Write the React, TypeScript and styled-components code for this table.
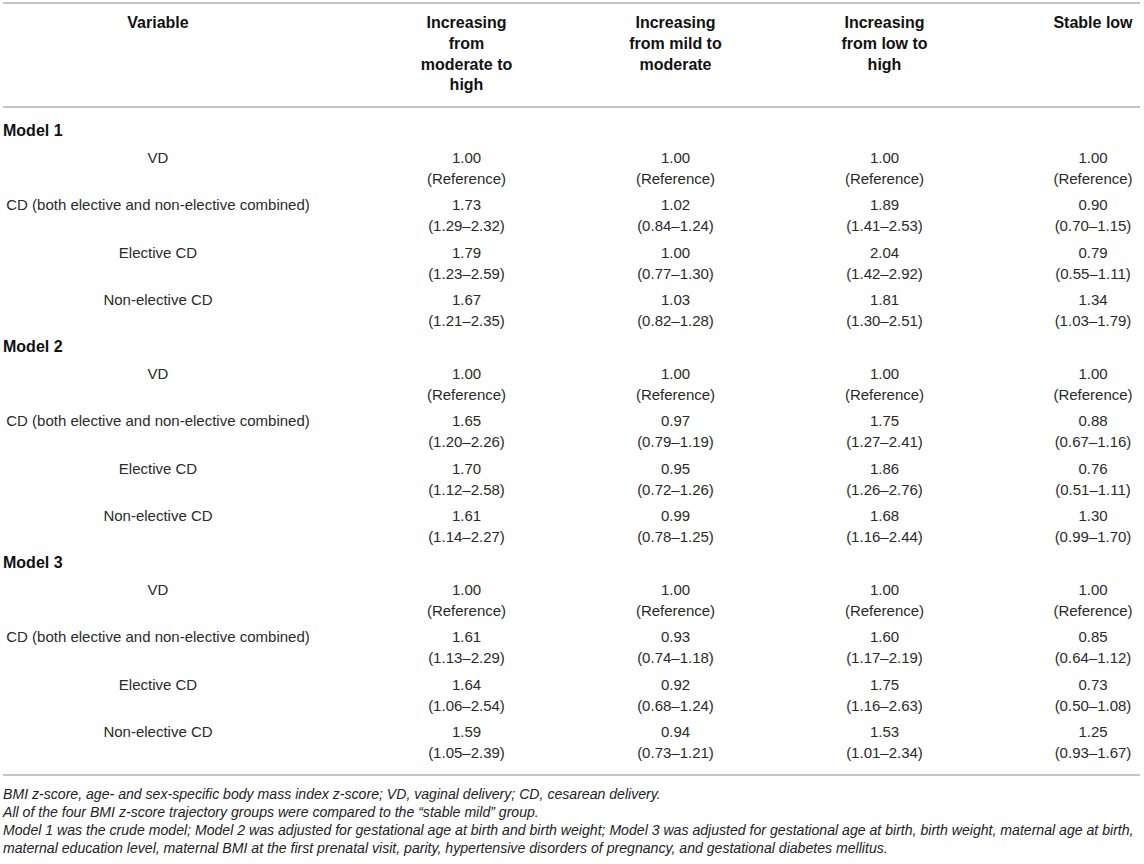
import React from "react";
import styled, { createGlobalStyle } from "styled-components";

const GlobalStyle = createGlobalStyle`
  html, body {
    margin: 0;
    padding: 0;
    background: #ffffff;
  }
  body {
    font-family: "Liberation Sans", Arial, Helvetica, sans-serif;
    color: #222222;
  }
`;

const Page = styled.div`
  width: 1137px;
  padding: 2px 0 0 3px;
`;

const Table = styled.div`
  border-top: 2px solid #c4c4c4;
  border-bottom: 2px solid #c4c4c4;
`;

const Head = styled.div`
  border-bottom: 2px solid #c4c4c4;
`;

const Body = styled.div`
  padding-bottom: 8px;
`;

const Row = styled.div`
  display: grid;
  grid-template-columns: 359px 209px 209px 209px 151px;
`;

type ColKind = "var" | "num" | "last";

const HeadCell = styled.div<{ $kind: ColKind }>`
  font-weight: 700;
  font-size: 16px;
  line-height: 20.8px;
  color: #111111;
  text-align: center;
  padding: 9px 0 10px;
  padding-right: ${(p) => (p.$kind === "var" ? "49px" : "0")};
  padding-left: ${(p) => (p.$kind === "last" ? "57px" : "0")};
`;

const HeadLabel = styled.div`
  max-width: 104px;
  margin: 0 auto;
`;

const VarHeadLabel = styled.div`
  margin: 0 auto;
`;

const ModelRow = styled.div<{ $first: boolean }>`
  font-weight: 700;
  font-size: 16px;
  line-height: 21px;
  color: #111111;
  padding: ${(p) => (p.$first ? "12px" : "2.5px")} 0 2.5px;
`;

const Cell = styled.div<{ $kind: ColKind }>`
  font-size: 15px;
  line-height: 21px;
  color: #2a2a2a;
  text-align: center;
  padding: 3px 0 2.5px;
  padding-right: ${(p) => (p.$kind === "var" ? "49px" : "0")};
  padding-left: ${(p) => (p.$kind === "last" ? "57px" : "0")};
`;

const Line = styled.div``;

const Notes = styled.div`
  margin-top: 9px;
  font-size: 14.1px;
  line-height: 18px;
  font-style: italic;
  color: #222222;
`;

const Note = styled.p`
  margin: 0;
`;

type Val = [string, string];
type DataRow = { label: string; values: Val[] };
type Model = { name: string; rows: DataRow[] };

const REF: Val = ["1.00", "(Reference)"];

const models: Model[] = [
  {
    name: "Model 1",
    rows: [
      { label: "VD", values: [REF, REF, REF, REF] },
      {
        label: "CD (both elective and non-elective combined)",
        values: [
          ["1.73", "(1.29–2.32)"],
          ["1.02", "(0.84–1.24)"],
          ["1.89", "(1.41–2.53)"],
          ["0.90", "(0.70–1.15)"],
        ],
      },
      {
        label: "Elective CD",
        values: [
          ["1.79", "(1.23–2.59)"],
          ["1.00", "(0.77–1.30)"],
          ["2.04", "(1.42–2.92)"],
          ["0.79", "(0.55–1.11)"],
        ],
      },
      {
        label: "Non-elective CD",
        values: [
          ["1.67", "(1.21–2.35)"],
          ["1.03", "(0.82–1.28)"],
          ["1.81", "(1.30–2.51)"],
          ["1.34", "(1.03–1.79)"],
        ],
      },
    ],
  },
  {
    name: "Model 2",
    rows: [
      { label: "VD", values: [REF, REF, REF, REF] },
      {
        label: "CD (both elective and non-elective combined)",
        values: [
          ["1.65", "(1.20–2.26)"],
          ["0.97", "(0.79–1.19)"],
          ["1.75", "(1.27–2.41)"],
          ["0.88", "(0.67–1.16)"],
        ],
      },
      {
        label: "Elective CD",
        values: [
          ["1.70", "(1.12–2.58)"],
          ["0.95", "(0.72–1.26)"],
          ["1.86", "(1.26–2.76)"],
          ["0.76", "(0.51–1.11)"],
        ],
      },
      {
        label: "Non-elective CD",
        values: [
          ["1.61", "(1.14–2.27)"],
          ["0.99", "(0.78–1.25)"],
          ["1.68", "(1.16–2.44)"],
          ["1.30", "(0.99–1.70)"],
        ],
      },
    ],
  },
  {
    name: "Model 3",
    rows: [
      { label: "VD", values: [REF, REF, REF, REF] },
      {
        label: "CD (both elective and non-elective combined)",
        values: [
          ["1.61", "(1.13–2.29)"],
          ["0.93", "(0.74–1.18)"],
          ["1.60", "(1.17–2.19)"],
          ["0.85", "(0.64–1.12)"],
        ],
      },
      {
        label: "Elective CD",
        values: [
          ["1.64", "(1.06–2.54)"],
          ["0.92", "(0.68–1.24)"],
          ["1.75", "(1.16–2.63)"],
          ["0.73", "(0.50–1.08)"],
        ],
      },
      {
        label: "Non-elective CD",
        values: [
          ["1.59", "(1.05–2.39)"],
          ["0.94", "(0.73–1.21)"],
          ["1.53", "(1.01–2.34)"],
          ["1.25", "(0.93–1.67)"],
        ],
      },
    ],
  },
];

const headers = [
  "Increasing from moderate to high",
  "Increasing from mild to moderate",
  "Increasing from low to high",
  "Stable low",
];

const kindFor = (i: number): ColKind => (i === 3 ? "last" : "num");

export default function App() {
  return (
    <>
      <GlobalStyle />
      <Page>
        <Table>
          <Head>
            <Row>
              <HeadCell $kind="var">
                <VarHeadLabel>Variable</VarHeadLabel>
              </HeadCell>
              {headers.map((h, i) => (
                <HeadCell key={h} $kind={kindFor(i)}>
                  <HeadLabel>{h}</HeadLabel>
                </HeadCell>
              ))}
            </Row>
          </Head>
          <Body>
            {models.map((m, mi) => (
              <React.Fragment key={m.name}>
                <ModelRow $first={mi === 0}>{m.name}</ModelRow>
                {m.rows.map((r) => (
                  <Row key={m.name + r.label}>
                    <Cell $kind="var">{r.label}</Cell>
                    {r.values.map((v, i) => (
                      <Cell key={i} $kind={kindFor(i)}>
                        <Line>{v[0]}</Line>
                        <Line>{v[1]}</Line>
                      </Cell>
                    ))}
                  </Row>
                ))}
              </React.Fragment>
            ))}
          </Body>
        </Table>
        <Notes>
          <Note>
            BMI z-score, age- and sex-specific body mass index z-score; VD, vaginal delivery; CD,
            cesarean delivery.
          </Note>
          <Note>All of the four BMI z-score trajectory groups were compared to the “stable mild” group.</Note>
          <Note>
            Model 1 was the crude model; Model 2 was adjusted for gestational age at birth and birth
            weight; Model 3 was adjusted for gestational age at birth, birth weight, maternal age at
            birth, maternal education level, maternal BMI at the first prenatal visit, parity,
            hypertensive disorders of pregnancy, and gestational diabetes mellitus.
          </Note>
        </Notes>
      </Page>
    </>
  );
}
